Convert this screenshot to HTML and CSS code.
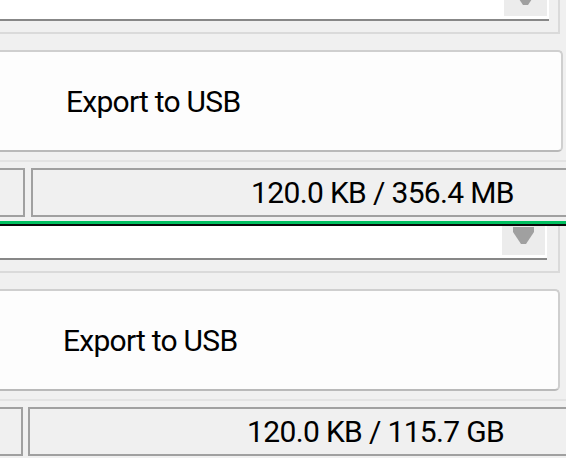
FILE: index.html
```html
<!DOCTYPE html>
<html lang="en">
<head>
    <meta charset="UTF-8">
    <meta name="viewport" content="width=device-width, initial-scale=1.0">
    <title>Export to USB</title>
    <link rel="stylesheet" href="styles.css">
</head>
<body>
    <div class="panel panel-upper">
        <div class="combo-frame">
            <div class="combo">
                <div class="combo-btn">
                    <svg width="21" height="17" viewBox="0 0 21 17"><path d="M0 0H21V5L13 17H8L0 5Z" fill="#a0a0a0"/></svg>
                </div>
            </div>
        </div>
        <div class="action">
            <button class="action-btn">Export to USB</button>
        </div>
        <div class="sep"></div>
        <div class="status">
            <div class="status-cell status-small"></div>
            <div class="status-cell status-size">120.0 KB / 356.4 MB</div>
        </div>
    </div>

    <div class="divider"></div>

    <div class="panel panel-lower">
        <div class="combo-frame">
            <div class="combo">
                <div class="combo-btn">
                    <svg width="21" height="17" viewBox="0 0 21 17"><path d="M0 0H21V5L13 17H8L0 5Z" fill="#a0a0a0"/></svg>
                </div>
            </div>
        </div>
        <div class="action">
            <button class="action-btn">Export to USB</button>
        </div>
        <div class="sep"></div>
        <div class="status">
            <div class="status-cell status-small"></div>
            <div class="status-cell status-size">120.0 KB / 115.7 GB</div>
        </div>
    </div>
</body>
</html>
```

FILE: styles.css
```css
body {
    margin: 0;
    background: #f0f0f0;
    font-family: Roboto, 'Liberation Sans', sans-serif;
    color: #000;
    width: 566px;
    height: 458px;
    overflow: hidden;
}

.panel {
    height: 234px;
    overflow: hidden;
}

.panel-upper {
    margin-top: -13px;
}

/* dropdown row */
.combo-frame {
    width: 558px;
    height: 45px;
    border-right: 2px solid #dadada;
    border-bottom: 2px solid #dadada;
}

.combo {
    width: 549px;
    height: 34px;
    padding-right: 2px;
    box-sizing: border-box;
    background: #fff;
    border-bottom: 2px solid #878787;
    display: flex;
    justify-content: flex-end;
    align-items: flex-start;
}

.panel-lower .combo {
    width: 547px;
}

.combo-btn {
    width: 43px;
    height: 29px;
    background: #ececec;
    display: flex;
    justify-content: center;
    align-items: flex-start;
}

.combo-btn svg {
    display: block;
    margin-top: 1px;
}

/* big button */
.action {
    padding-top: 16px;
}

.action-btn {
    display: block;
    margin: 0 0 0 -10px;
    width: 573px;
    height: 102px;
    box-sizing: border-box;
    border: 2px solid #cfcfcf;
    border-bottom-color: #b9b9b9;
    border-radius: 0 5px 5px 0;
    background: #fdfdfd;
    font-family: inherit;
    font-size: 30px;
    letter-spacing: -0.75px;
    color: #000;
    text-align: left;
    padding: 0 0 0 74px;
}

.panel-lower .action-btn {
    width: 570px;
    padding-left: 71px;
}

.sep {
    margin-top: 8px;
    height: 2px;
    background: #e3e3e3;
}

/* status bar */
.status {
    margin-top: 6px;
    display: flex;
    gap: 6px;
    height: 49px;
}

.panel-lower .status {
    gap: 5px;
}

.status-cell {
    height: 49px;
    box-sizing: border-box;
    border: 2px solid #a0a0a0;
}

.status-small {
    margin-left: -10px;
    width: 35px;
}

.panel-lower .status-small {
    width: 33px;
}

.status-size {
    flex: 1;
    margin-right: -20px;
    padding-left: 218px;
    font-size: 30px;
    letter-spacing: -0.65px;
    line-height: 45px;
    white-space: nowrap;
}

.panel-lower .status-size {
    padding-left: 217px;
}

.divider {
    height: 3px;
    background: #00c060;
    border-bottom: 2px solid #0a0a0a;
}
```
